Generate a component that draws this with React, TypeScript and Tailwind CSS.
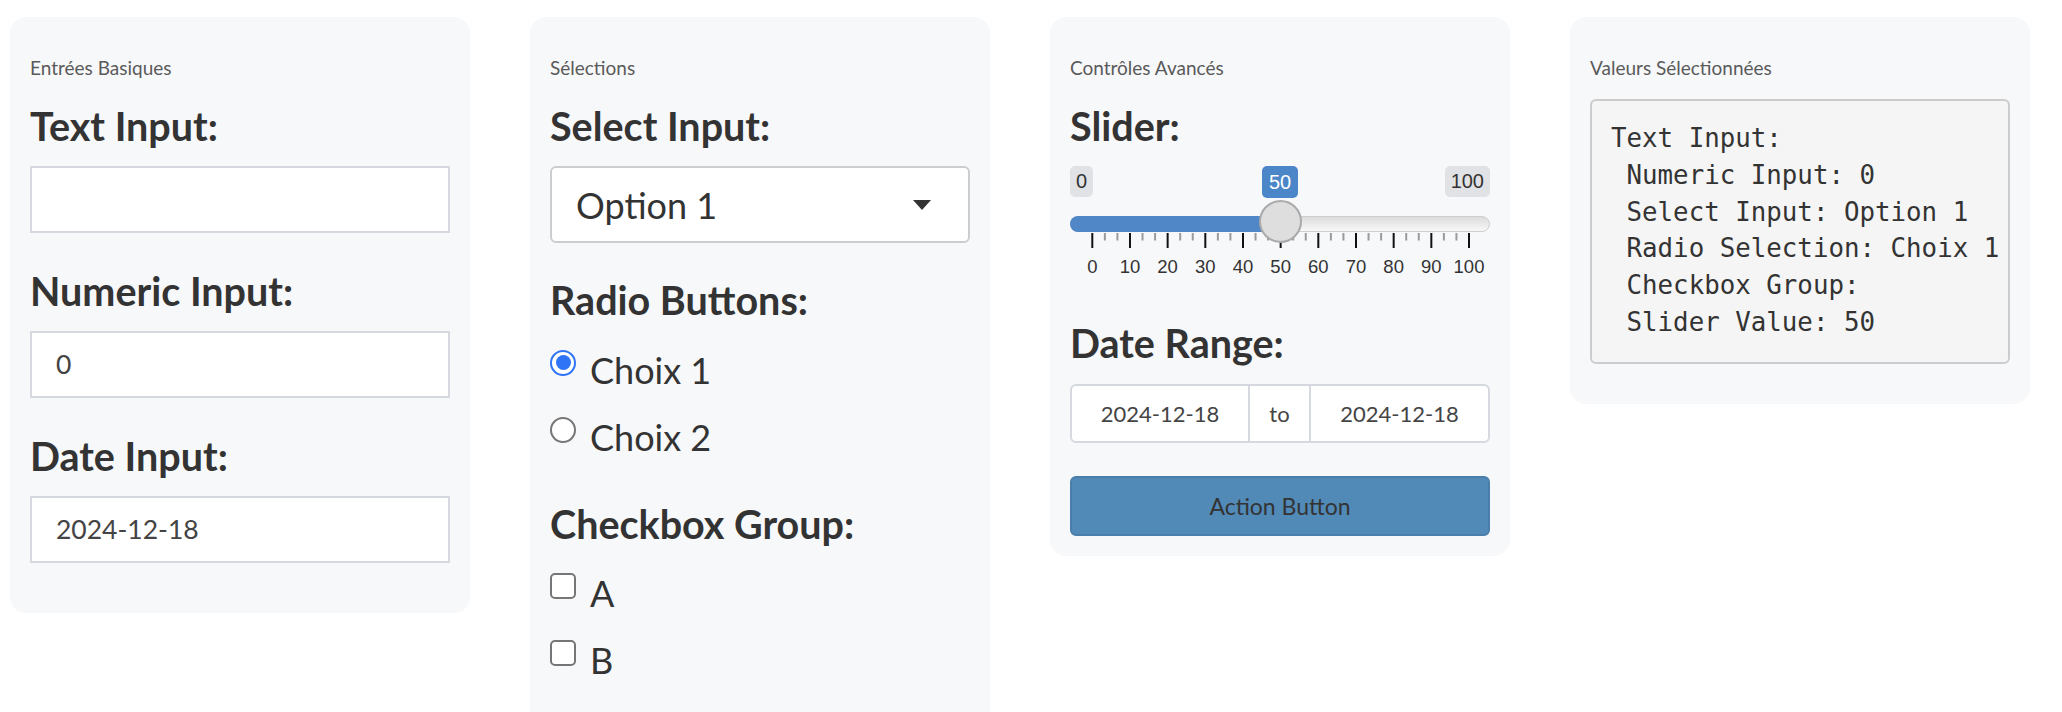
import React from "react";

const SANS = "font-['Lato','Noto_Sans',sans-serif]";

function Caption({ children }: { children: React.ReactNode }) {
  return (
    <div className="mt-[19px] h-[24px] text-[19px] leading-[24px] text-[#5a5a5a]">{children}</div>
  );
}

function Heading({ children, className = "" }: { children: React.ReactNode; className?: string }) {
  return (
    <div className={`h-[44px] text-[39.5px] leading-[44px] font-bold text-[#333] whitespace-nowrap ${className}`}>
      {children}
    </div>
  );
}

function TextBox({ value, className = "" }: { value: string; className?: string }) {
  return (
    <div
      className={`mt-[18px] h-[67px] border-2 border-[#d5d8de] bg-white pl-[24px] flex items-center text-[26.5px] text-[#444] ${className}`}
    >
      {value}
    </div>
  );
}

function Radio({ checked, label }: { checked: boolean; label: string }) {
  return (
    <div className="h-[50px] flex items-start gap-[14px]">
      {checked ? (
        <div className="mt-[5px] w-[26px] h-[26px] rounded-full border-[2.5px] border-[#2f73f6] bg-white flex items-center justify-center shrink-0">
          <div className="w-[15px] h-[15px] rounded-full bg-[#2f73f6]" />
        </div>
      ) : (
        <div className="mt-[5px] w-[26px] h-[26px] rounded-full border-2 border-[#767676] bg-white shrink-0" />
      )}
      <span className="text-[36px] leading-[50px] text-[#333]">{label}</span>
    </div>
  );
}

function Check({ label }: { label: string }) {
  return (
    <div className="h-[50px] flex items-start gap-[14px]">
      <div className="mt-[5px] w-[26px] h-[26px] rounded-[5px] border-[2.5px] border-[#767676] bg-white shrink-0" />
      <span className="text-[36px] leading-[50px] text-[#333]">{label}</span>
    </div>
  );
}

function Slider() {
  const start = 22.3;
  const step = 37.67;
  const majors = Array.from({ length: 11 }, (_, i) => start + i * step);
  const minors: number[] = [];
  for (let i = 0; i < 10; i++) {
    minors.push(majors[i] + step / 3, majors[i] + (2 * step) / 3);
  }
  return (
    <div className="relative mt-[18px] h-[118px] w-[420px] font-['Liberation_Sans',Arial,sans-serif]">
      <div className="absolute left-0 top-0 h-[31px] px-[6px] rounded-[5px] bg-[#e1e2e5] text-[20px] leading-[31px] text-[#333]">
        0
      </div>
      <div className="absolute right-0 top-0 h-[31px] px-[6px] rounded-[5px] bg-[#e1e2e5] text-[20px] leading-[31px] text-[#333]">
        100
      </div>
      <div className="absolute left-[192px] top-0 h-[32px] w-[36px] rounded-[5px] bg-[#4a86c8] text-[20px] leading-[32px] text-white text-center">
        50
      </div>
      <div className="absolute left-0 right-0 top-[50px] h-[16px] rounded-full border border-[#cfcfcf] bg-gradient-to-b from-[#dcdcdc] to-[#f8f8f8]" />
      <div className="absolute left-0 w-[212px] top-[50px] h-[16px] rounded-l-full bg-[#5087c7]" />
      <svg className="absolute left-0 top-[66.7px]" width="420" height="16">
        {minors.map((x, i) => (
          <line key={"m" + i} x1={x} x2={x} y1={0} y2={7.5} stroke="#9a9a9a" strokeWidth={2} />
        ))}
        {majors.map((x, i) => (
          <line key={"M" + i} x1={x} x2={x} y1={0} y2={15} stroke="#111" strokeWidth={2} />
        ))}
      </svg>
      {majors.map((x, i) => (
        <div
          key={"l" + i}
          className="absolute top-[90.7px] w-[40px] -ml-[20px] text-center text-[18.5px] leading-[20px] text-[#333]"
          style={{ left: x }}
        >
          {i * 10}
        </div>
      ))}
      <div className="absolute left-[188.5px] top-[34px] w-[43px] h-[43px] rounded-full bg-[#dedede] border-2 border-[#aaaaaa]" />
    </div>
  );
}

export default function App() {
  return (
    <div className={`min-h-[712px] bg-white ${SANS} flex items-start gap-[60px] pl-[10px] pt-[17px]`}>
      {/* Panel 1 */}
      <div className="w-[460px] shrink-0 rounded-[16px] bg-[#f7f8fa] px-[20px] pt-[20px] pb-[20px]">
        <Caption>Entrées Basiques</Caption>
        <Heading className="mt-[24.4px]">Text Input:</Heading>
        <TextBox value="" />
        <Heading className="mt-[36px]">Numeric Input:</Heading>
        <TextBox value="0" />
        <Heading className="mt-[36px]">Date Input:</Heading>
        <TextBox value="2024-12-18" className="mb-[30px]" />
      </div>

      {/* Panel 2 */}
      <div className="w-[460px] shrink-0 rounded-[16px] bg-[#f7f8fa] px-[20px] pt-[20px] pb-[20px]">
        <Caption>Sélections</Caption>
        <Heading className="mt-[24.4px]">Select Input:</Heading>
        <div className="mt-[18px] h-[77px] rounded-[6px] border-2 border-[#cdcdcd] bg-white pl-[24px] pr-[37px] flex items-center justify-between">
          <span className="text-[36px] text-[#333]">Option 1</span>
          <svg width="18" height="10" viewBox="0 0 18 10">
            <polygon points="0,0 18,0 9,10" fill="#333" />
          </svg>
        </div>
        <Heading className="mt-[35px]">Radio Buttons:</Heading>
        <div className="mt-[22.5px] flex flex-col gap-[16.7px]">
          <Radio checked label="Choix 1" />
          <Radio checked={false} label="Choix 2" />
        </div>
        <Heading className="mt-[40.5px]">Checkbox Group:</Heading>
        <div className="mt-[21.5px] flex flex-col gap-[17px] mb-[30px]">
          <Check label="A" />
          <Check label="B" />
        </div>
      </div>

      {/* Panel 3 */}
      <div className="w-[460px] shrink-0 rounded-[16px] bg-[#f7f8fa] px-[20px] pt-[20px] pb-[20px]">
        <Caption>Contrôles Avancés</Caption>
        <Heading className="mt-[24.4px]">Slider:</Heading>
        <Slider />
        <Heading className="mt-[36.7px]">Date Range:</Heading>
        <div className="mt-[18.6px] h-[59px] flex rounded-[6px] border-2 border-[#d5d8de] bg-white text-[22px] text-[#444]">
          <div className="w-[176px] flex items-center justify-center">2024-12-18</div>
          <div className="w-[63px] flex items-center justify-center border-x-2 border-[#d5d8de]">to</div>
          <div className="flex-1 flex items-center justify-center">2024-12-18</div>
        </div>
        <button className="mt-[33.7px] w-full h-[60px] rounded-[6px] border-2 border-[#4a7eab] bg-[#5189b7] text-[23px] text-[#333]">
          Action Button
        </button>
      </div>

      {/* Panel 4 */}
      <div className="w-[460px] shrink-0 rounded-[16px] bg-[#f7f8fa] px-[20px] pt-[20px] pb-[20px]">
        <Caption>Valeurs Sélectionnées</Caption>
        <pre className="mt-[19.3px] mb-[20px] rounded-[6px] border-2 border-[#cccccc] bg-[#f5f5f5] px-[19px] pt-[19px] pb-[21px] font-['DejaVu_Sans_Mono',monospace] text-[25.8px] leading-[36.7px] text-[#333] overflow-visible whitespace-pre">
{`Text Input: 
 Numeric Input: 0
 Select Input: Option 1
 Radio Selection: Choix 1
 Checkbox Group: 
 Slider Value: 50`}
        </pre>
      </div>
    </div>
  );
}
